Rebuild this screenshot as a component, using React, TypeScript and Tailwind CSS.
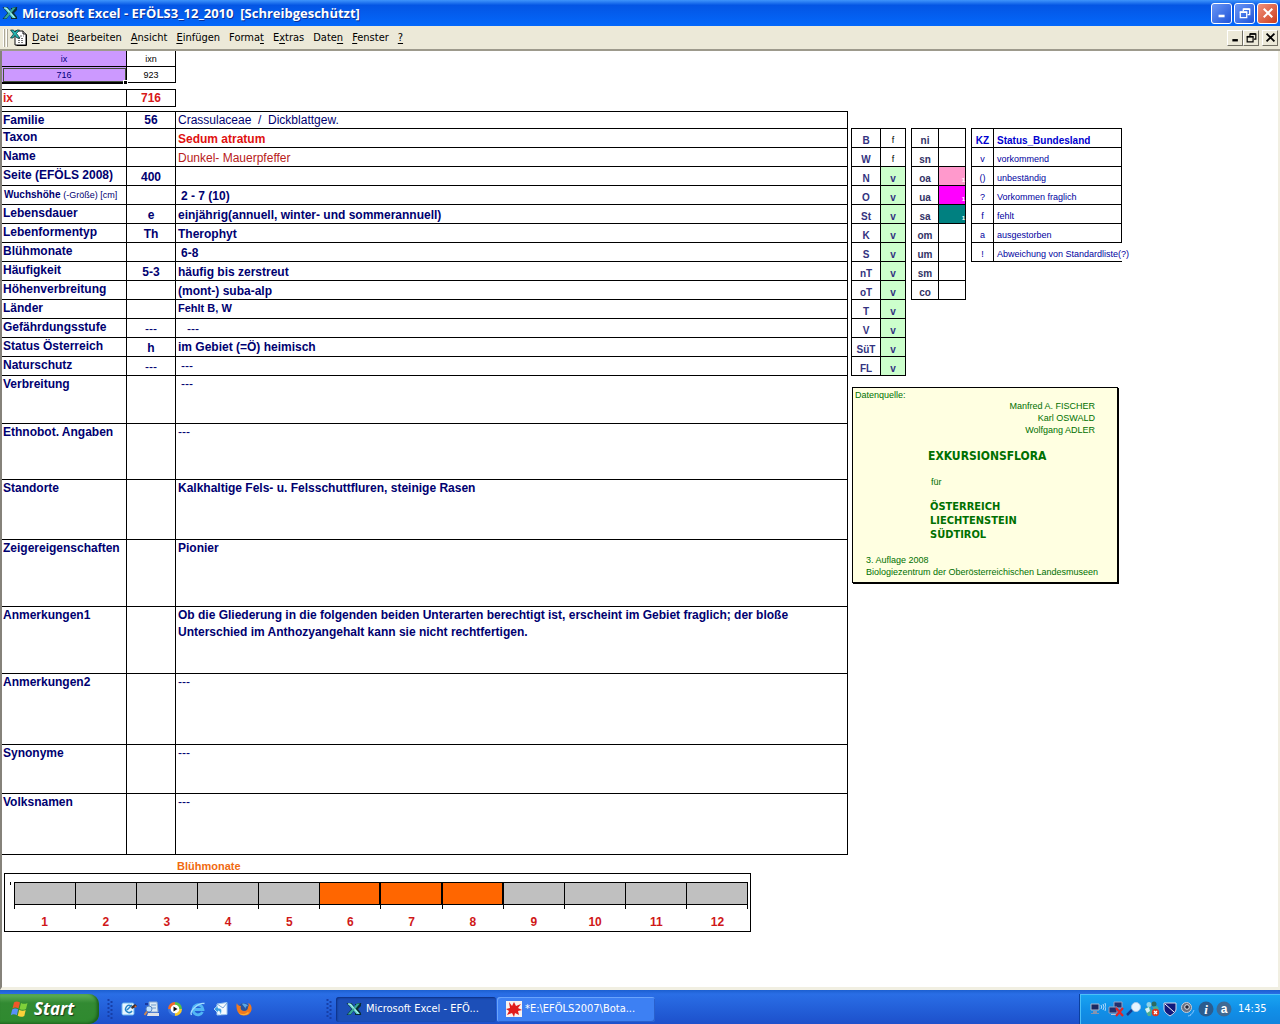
import React from 'react';

type Align = 'top' | 'middle' | 'bottom';

interface Row {
  label: string;
  code?: string;
  value?: string;
  height: string;
  align?: Align;
  tone?: string;
  indent?: string;
}

const alignClass = {
  top: 'align-top',
  middle: 'align-middle',
  bottom: 'align-bottom',
};

const rows: Row[] = [
  { label: 'Familie', code: '56', value: 'Crassulaceae\u00a0 /\u00a0 Dickblattgew.', height: 'h-[17px]', tone: 'font-normal' },
  { label: 'Taxon', value: 'Sedum atratum', height: 'h-[19px]', tone: 'text-[#e01010]' },
  { label: 'Name', value: 'Dunkel- Mauerpfeffer', height: 'h-[19px]', tone: 'font-normal text-[#b82020]' },
  { label: 'Seite (EFÖLS 2008)', code: '400', height: 'h-[19px]' },
  { label: 'Wuchshöhe', value: '2 - 7 (10)', height: 'h-[19px]', indent: 'pl-[5px]' },
  { label: 'Lebensdauer', code: 'e', value: 'einjährig(annuell, winter- und sommerannuell)', height: 'h-[19px]' },
  { label: 'Lebenformentyp', code: 'Th', value: 'Therophyt', height: 'h-[19px]' },
  { label: 'Blühmonate', value: '6-8', height: 'h-[19px]', indent: 'pl-[5px]' },
  { label: 'Häufigkeit', code: '5-3', value: 'häufig bis zerstreut', height: 'h-[19px]' },
  { label: 'Höhenverbreitung', value: '(mont-) suba-alp', height: 'h-[19px]' },
  { label: 'Länder', value: 'Fehlt B, W', height: 'h-[19px]', align: 'top', tone: 'text-[11px]' },
  { label: 'Gefährdungsstufe', code: '---', value: '---', height: 'h-[19px]', indent: 'pl-[11px]' },
  { label: 'Status Österreich', code: 'h', value: 'im Gebiet (=Ö) heimisch', height: 'h-[19px]', align: 'middle' },
  { label: 'Naturschutz', code: '---', value: '---', height: 'h-[19px]', align: 'middle', indent: 'pl-[5px]' },
  { label: 'Verbreitung', value: '---', height: 'h-[48px]', align: 'top', indent: 'pl-[5px]' },
  { label: 'Ethnobot. Angaben', value: '---', height: 'h-[56px]', align: 'top' },
  { label: 'Standorte', value: 'Kalkhaltige Fels- u. Felsschuttfluren, steinige Rasen', height: 'h-[60px]', align: 'top' },
  { label: 'Zeigereigenschaften', value: 'Pionier', height: 'h-[67px]', align: 'top' },
  {
    label: 'Anmerkungen1',
    value:
      'Ob die Gliederung in die folgenden beiden Unterarten berechtigt ist, erscheint im Gebiet fraglich; der bloße Unterschied im Anthozyangehalt kann sie nicht rechtfertigen.',
    height: 'h-[67px]',
    align: 'top',
    tone: 'leading-[17px]',
  },
  { label: 'Anmerkungen2', value: '---', height: 'h-[71px]', align: 'top' },
  { label: 'Synonyme', value: '---', height: 'h-[49px]', align: 'top' },
  { label: 'Volksnamen', value: '---', height: 'h-[61px]', align: 'top' },
];

const regions = [
  ['B', 'f'], ['W', 'f'], ['N', 'v'], ['O', 'v'], ['St', 'v'], ['K', 'v'], ['S', 'v'],
  ['nT', 'v'], ['oT', 'v'], ['T', 'v'], ['V', 'v'], ['SüT', 'v'], ['FL', 'v'],
];

const zones = [
  { name: 'ni' },
  { name: 'sn' },
  { name: 'oa', fill: 'bg-[#ff99cc]' },
  { name: 'ua', fill: 'bg-[#ff00ff]' },
  { name: 'sa', fill: 'bg-[#008080]' },
  { name: 'om' },
  { name: 'um' },
  { name: 'sm' },
  { name: 'co' },
];

const statuses = [
  ['v', 'vorkommend'],
  ['()', 'unbeständig'],
  ['?', 'Vorkommen fraglich'],
  ['f', 'fehlt'],
  ['a', 'ausgestorben'],
  ['!', 'Abweichung von Standardliste(?)'],
];

const menus = [
  ['', 'D', 'atei'],
  ['', 'B', 'earbeiten'],
  ['', 'A', 'nsicht'],
  ['', 'E', 'infügen'],
  ['Forma', 't', ''],
  ['E', 'x', 'tras'],
  ['Date', 'n', ''],
  ['', 'F', 'enster'],
  ['', '?', ''],
];

const months = [1, 2, 3, 4, 5, 6, 7, 8, 9, 10, 11, 12];
const flowering = [6, 7, 8];

const tahoma = "font-['DejaVu_Sans_Condensed','Noto_Sans',sans-serif]";
const trebuchet = "font-['Open_Sans','Noto_Sans',sans-serif]";

function ExcelIcon({ className }: { className?: string }) {
  return (
    <svg viewBox="0 0 16 16" className={className} aria-hidden="true">
      <path d="M9 3h6v2l-3 3 3 4v2H9z" fill="#0a3038" />
      <path d="M0.500 2h5l3 4 3-4h4l-5 6 5 6h-5l-3-4-3 4h-4l5-6z" fill="#0b2c33" />
      <path d="M1.500 2.500h3.500l9 10.500h-3.500z" fill="#5fd6d0" />
      <path d="M11 2.500h3L4.500 13.500H1.500z" fill="#35a79c" />
      <path d="M2 3h2l8.500 9.500" fill="none" stroke="#d8fffa" strokeWidth="0.800" />
    </svg>
  );
}

function WorkbookIcon() {
  return (
    <svg viewBox="0 0 18 18" className="size-[18px]" aria-hidden="true">
      <path d="M5 2h8l3 3v11H5z" fill="#fff" stroke="#111" />
      <path d="M13 2v3h3" fill="#ccc" stroke="#111" />
      <path d="M10 7h4M8 9.500h6M8 11.500h6M8 13.500h6" stroke="#777" strokeDasharray="2 1" />
      <path d="M16.500 5.500v11h-10" fill="none" stroke="#000" />
      <path d="M0.500 1h3l1.500 2 2-2h2.500L6.500 4.500 10 9H7L5 6.500 3 9H0.500L3.500 5z" fill="#25b3ae" stroke="#062b2e" strokeWidth="0.700" />
    </svg>
  );
}

function Minimize() {
  return <path d="M3 10.500h7" strokeWidth="3" />;
}

function Restore() {
  return (
    <>
      <path d="M5 5V2.500h7.500V9H10" strokeWidth="1.500" />
      <path d="M5 2.500h7.500" strokeWidth="2" />
      <path d="M1.500 6h7.500v6.500H1.500z" strokeWidth="1.500" />
      <path d="M1 6h8.500" strokeWidth="2" />
    </>
  );
}

function Close() {
  return <path d="M2 2l10 10M12 2L2 12" strokeWidth="2.300" />;
}

function CaptionButton({ label, tone, children }: { label: string; tone: string; children: React.ReactNode }) {
  return (
    <button
      aria-label={label}
      className={`flex size-[21px] items-center justify-center rounded-[3px] border border-white ${tone}`}
    >
      <svg viewBox="0 0 14 14" className="size-3" fill="none" stroke="#fff">
        {children}
      </svg>
    </button>
  );
}

function SheetButton({ label, children }: { label: string; children: React.ReactNode }) {
  return (
    <button
      aria-label={label}
      className="flex size-4 items-center justify-center border border-t-white border-l-white border-r-[#716f64] border-b-[#716f64] bg-[#ece9d8]"
    >
      <svg viewBox="0 0 14 14" className="size-[11px]" fill="none" stroke="#000">
        {children}
      </svg>
    </button>
  );
}

function TitleBar() {
  return (
    <header className="flex h-[26px] items-center bg-linear-to-b from-[#3f94fb] from-0% via-[#0455e4] via-20% to-[#0468fb] pr-[2px] pl-[2px]">
      <ExcelIcon className="size-4" />
      <h1 className={`ml-1 flex-1 text-[13px] leading-[20px] font-bold whitespace-pre text-white [text-shadow:1px_1px_#0b2f96] ${trebuchet}`}>
        {'Microsoft Excel - EFÖLS3_12_2010  [Schreibgeschützt]'}
      </h1>
      <div className="flex gap-[2px]">
        <CaptionButton label="Minimieren" tone="bg-linear-to-br from-[#6a96f5] to-[#1f52d8]"><Minimize /></CaptionButton>
        <CaptionButton label="Wiederherstellen" tone="bg-linear-to-br from-[#6a96f5] to-[#1f52d8]"><Restore /></CaptionButton>
        <CaptionButton label="Schließen" tone="bg-linear-to-br from-[#f0907a] to-[#cc3a14]"><Close /></CaptionButton>
      </div>
    </header>
  );
}

function MenuBar() {
  return (
    <nav className={`flex h-[25px] items-center border-b-2 border-[#9d9a8c] bg-[#ece9d8] pr-[2px] pl-[3px] text-[11px] text-black ${tahoma}`}>
      <span className="h-[18px] w-[2px] border-l border-white bg-[#aca899]" />
      <span className="mr-[2px] ml-px h-[18px] w-[2px] border-l border-white bg-[#aca899]" />
      <WorkbookIcon />
      <div className="ml-1 flex flex-1 gap-[9px]">
        {menus.map(([before, key, after]) => (
          <button key={before + key + after} className="leading-4">
            {before}
            <span className="underline underline-offset-2">{key}</span>
            {after}
          </button>
        ))}
      </div>
      <div className="flex">
        <SheetButton label="Mappe minimieren"><Minimize /></SheetButton>
        <SheetButton label="Mappe wiederherstellen"><Restore /></SheetButton>
        <span className="w-[3px]" />
        <SheetButton label="Mappe schließen"><Close /></SheetButton>
      </div>
    </nav>
  );
}

function IndexTables() {
  return (
    <>
      <table className="w-[174px] table-fixed border-separate border-spacing-0 text-center text-[9px] leading-[14px]">
        <thead>
          <tr>
            <th className="h-4 w-[125px] border-r border-b border-black bg-[#cc99ff] p-0 font-normal text-[#000080]">ix</th>
            <th className="h-4 border-r border-b border-black p-0 font-normal">ixn</th>
          </tr>
        </thead>
        <tbody>
          <tr>
            <td className="relative h-4 border-r border-b border-black bg-[#cc99ff] p-0 text-[#000080] outline-1 -outline-offset-2 outline-[#44503c]">
              716
              <span className="absolute -right-[2px] -bottom-[3px] size-[5px] border border-white bg-black" />
            </td>
            <td className="h-4 border-r border-b border-black p-0">923</td>
          </tr>
        </tbody>
      </table>
      <div className="mb-[5px] h-px w-[124px] bg-black" />
      <table className="mb-1 w-[174px] table-fixed border-separate border-spacing-0 border-t border-black text-[12px] leading-4 text-[#d81818]">
        <tbody>
          <tr>
            <th scope="row" className="h-[17px] w-[125px] border-r border-b border-black p-0 pl-px text-left font-bold">ix</th>
            <td className="h-[17px] border-r border-b border-black p-0 text-center font-bold">716</td>
          </tr>
        </tbody>
      </table>
    </>
  );
}

function SpeciesTable() {
  return (
    <table className="w-full table-fixed border-separate border-spacing-0 border-t border-black text-[12px] leading-4 font-bold text-[#000070]">
      <colgroup>
        <col className="w-[125px]" />
        <col className="w-[49px]" />
        <col />
      </colgroup>
      <tbody>
        {rows.map((row) => (
          <tr key={row.label}>
            <th scope="row" className="border-r border-b border-black p-0 pl-px text-left align-top whitespace-nowrap">
              {row.label === 'Wuchshöhe' ? (
                <span className="pl-px text-[10px]">
                  Wuchshöhe <span className="text-[9px] font-normal">(-Größe) [cm]</span>
                </span>
              ) : (
                row.label
              )}
            </th>
            <td className={`border-r border-b border-black p-0 text-center align-bottom ${row.code === '---' ? 'font-normal' : ''}`}>
              {row.code}
            </td>
            <td
              className={`border-r border-b border-black p-0 pr-2 ${row.height} ${alignClass[row.align ?? 'bottom']} ${row.indent ?? 'pl-[2px]'} ${row.value === '---' ? 'font-normal' : ''} ${row.tone ?? ''}`}
            >
              {row.value}
            </td>
          </tr>
        ))}
      </tbody>
    </table>
  );
}

function FloweringChart() {
  return (
    <figure className="mr-[97px] ml-[2px] flex flex-col">
      <figcaption className="h-[18px] pt-[3px] pl-[173px] text-[11px] leading-4 font-bold text-[#f06a10]">Blühmonate</figcaption>
      <div className="flex h-[59px] border border-black pt-2 pr-[2px]">
        <div className="w-[9px] shrink-0 pl-[5px]">
          <div className="h-[3px] w-px bg-black" />
        </div>
        <div className="flex-1">
          <div className="grid grid-cols-12 border-l border-black">
            {months.map((month) => (
              <div key={month}>
                <div
                  className={`h-[23px] border-y border-r border-black ${flowering.includes(month) ? 'border-r-2 bg-[#ff6600]' : 'bg-[#c0c0c0]'}`}
                />
                <div className="h-1 border-r border-black" />
              </div>
            ))}
          </div>
          <div className="grid grid-cols-12 pt-[5px] text-center text-[12px] leading-4 font-bold text-[#d01818]">
            {months.map((month) => (
              <span key={month}>{month}</span>
            ))}
          </div>
        </div>
      </div>
    </figure>
  );
}

function StatusTables() {
  const cell = 'h-[19px] border-r border-b border-black p-0 align-bottom';
  return (
    <div className="flex items-start gap-[5px] text-[10px] leading-[13px]">
      <table className="w-[55px] table-fixed border-separate border-spacing-0 border-t border-l border-black text-center font-bold text-[#333380]">
        <tbody>
          {regions.map(([name, state]) => (
            <tr key={name}>
              <th scope="row" className={`${cell} w-[29px]`}>{name}</th>
              <td className={`${cell} ${state === 'v' ? 'bg-[#ccffcc]' : 'text-[9px] font-normal text-black'}`}>{state}</td>
            </tr>
          ))}
        </tbody>
      </table>
      <table className="w-[55px] table-fixed border-separate border-spacing-0 border-t border-l border-black text-center font-bold text-[#333366]">
        <tbody>
          {zones.map(({ name, fill }) => (
            <tr key={name}>
              <th scope="row" className={`${cell} w-[27px]`}>{name}</th>
              <td className={`${cell} text-right text-[6px] leading-[10px] text-white ${fill ?? ''}`}>{fill ? '1' : ''}</td>
            </tr>
          ))}
        </tbody>
      </table>
      <table className="w-[151px] table-fixed border-separate border-spacing-0 border-t border-l border-black text-[9px] text-[#0000a0]">
        <thead>
          <tr className="text-[10px] text-[#0000d0]">
            <th className={`${cell} w-[22px] text-center font-bold`}>KZ</th>
            <th className={`${cell} pl-[3px] text-left font-bold`}>Status_Bundesland</th>
          </tr>
        </thead>
        <tbody>
          {statuses.map(([key, text]) => (
            <tr key={key}>
              <td className={`${cell} text-center`}>{key}</td>
              <td className={`h-[19px] border-b border-black p-0 pl-[3px] align-bottom whitespace-nowrap ${key === '!' ? '' : 'border-r'}`}>{text}</td>
            </tr>
          ))}
        </tbody>
      </table>
    </div>
  );
}

function SourceCard() {
  return (
    <aside className="mt-[11px] ml-px h-[196px] w-[266px] border border-black bg-[#ffffe1] pl-[2px] text-[9px] leading-3 text-[#007000] shadow-[1px_1px_#000]">
      <p className="pt-px">Datenquelle:</p>
      <p className="-mt-px pr-[22px] text-right">
        Manfred A. FISCHER
        <br />
        Karl OSWALD
        <br />
        Wolfgang ADLER
      </p>
      <div className={`pl-[73px] ${tahoma}`}>
        <h2 className="mt-3 text-[12px] leading-4 font-bold">EXKURSIONSFLORA</h2>
        <p className="my-3 pl-[3px] font-['Liberation_Sans',sans-serif]">für</p>
        <p className="pl-[2px] text-[11px] leading-[14px] font-bold">
          ÖSTERREICH
          <br />
          LIECHTENSTEIN
          <br />
          SÜDTIROL
        </p>
      </div>
      <p className="mt-3 pl-[11px]">
        3. Auflage 2008
        <br />
        Biologiezentrum der Oberösterreichischen Landesmuseen
      </p>
    </aside>
  );
}

function WindowsFlag() {
  return (
    <svg viewBox="0 0 20 18" className="h-[18px] w-5" aria-hidden="true">
      <path d="M4 2.500C6 1 8 1.500 10 2.500L8.500 8.500C6.500 7.500 4.500 7 2.500 8.500z" fill="#f0572a" />
      <path d="M11 3c2 1 4 1.300 6.500 0L16 9c-2.500 1.300-4.500 1-6.500 0z" fill="#7fd03a" />
      <path d="M2.200 9.500c2-1.500 4-1 6-.2L6.800 15.200C5 14.200 3 13.800.8 15.200z" fill="#5a90f8" />
      <path d="M9.200 9.800c2 1 4 1.400 6.500.2l-1.400 6c-2.500 1.300-4.500 1-6.600-.2z" fill="#fbd13a" />
    </svg>
  );
}

function Grip() {
  return (
    <svg viewBox="0 0 6 22" className="h-[22px] w-[6px]" aria-hidden="true">
      <path d="M1.500 1v20M4.500 3v18" stroke="#163fa8" strokeWidth="2" strokeDasharray="2 2" />
    </svg>
  );
}

function QuickLaunch() {
  return (
    <div className="flex items-center gap-[7px]">
      <button aria-label="Desktop anzeigen">
        <svg viewBox="0 0 16 16" className="size-4">
          <rect x="1" y="2" width="12" height="12" rx="1.500" fill="#e8f6ff" stroke="#6cb6ee" />
          <path d="M10 5a3.500 3.500 0 1 0 1 5M6 9l5-5" fill="none" stroke="#2484c8" strokeWidth="1.500" />
          <path d="M10 6l4-3 2 2-5 3z" fill="#3a2a2a" />
          <circle cx="14.500" cy="5.500" r="1" fill="#e86a2a" />
        </svg>
      </button>
      <button aria-label="Suche">
        <svg viewBox="0 0 16 16" className="size-4">
          <path d="M5 1h8l1 10H6z" fill="#dceaf8" stroke="#8aa8cc" />
          <path d="M7 4h5M8 7h4" stroke="#6f9ccb" />
          <path d="M4 12h11v3H3z" fill="#dfe2e7" />
          <circle cx="5" cy="8" r="3" fill="#bfe2ff" stroke="#5c86bf" />
          <path d="M3 10.500L0.500 14" stroke="#c98650" strokeWidth="2" />
          <path d="M1 2h3v2H1z" fill="#1738a0" />
        </svg>
      </button>
      <button aria-label="Medienwiedergabe">
        <svg viewBox="0 0 16 16" className="size-4">
          <path d="M8 1a7 7 0 0 0-7 7h7z" fill="#f06a2a" />
          <path d="M8 1a7 7 0 0 1 7 7H8z" fill="#56c04a" />
          <path d="M1 8a7 7 0 0 0 7 7V8z" fill="#3a76e0" />
          <path d="M15 8a7 7 0 0 1-7 7V8z" fill="#f7c92c" />
          <circle cx="8" cy="8" r="4.300" fill="#fff" />
          <path d="M6.500 5.500L10.500 8l-4 2.500z" fill="#111" />
        </svg>
      </button>
      <button aria-label="Internet Explorer">
        <svg viewBox="0 0 16 16" className="size-4">
          <path d="M12.500 11A5 5 0 1 1 13 8.500H4" fill="none" stroke="#52b6f4" strokeWidth="2.800" />
          <path d="M1.500 14C-1 10 9 1 14.500 2.500" fill="none" stroke="#a5dcff" strokeWidth="1.300" />
        </svg>
      </button>
      <button aria-label="Outlook Express">
        <svg viewBox="0 0 16 16" className="size-4">
          <path d="M4 3l10-1.500v12L4 14z" fill="#f5faff" stroke="#9cc7ee" />
          <path d="M4 3l6 4 4-5" fill="none" stroke="#7aa7d8" />
          <path d="M1 8l4-3.500V7c4 0 5 3 2 7 0-3 0-4-2-4v2z" fill="#3d9fe4" stroke="#e6f6ff" strokeWidth="0.700" />
        </svg>
      </button>
      <button aria-label="Firefox">
        <svg viewBox="0 0 16 16" className="size-4">
          <circle cx="8" cy="8" r="6" fill="#28539e" />
          <path d="M6 3c2-1 5 0 6 2-2 0-3 1-2 3z" fill="#5ba8e4" />
          <path d="M1 2c0 2 2 3 4 3-1 2 0 5 3 5s4-2 4-4c1-1 1-3 0-4 3 1 4 4 3.500 7A7.500 7.500 0 0 1 1 9C.500 6 0 4 1 2z" fill="#f0791e" />
          <path d="M3 12c3 2 7 1 9-1l1 1c-3 3-8 3-10 0z" fill="#fbb034" />
        </svg>
      </button>
    </div>
  );
}

function Tray() {
  return (
    <div className="flex h-[30px] w-[201px] items-center gap-[2px] border-l border-[#0a3f9e] bg-linear-to-b from-[#19a5f2] via-[#1190e8] to-[#1184de] pl-[10px] shadow-[inset_1px_1px_#4cc0f8]">
      <svg viewBox="0 0 16 16" className="size-4" aria-hidden="true">
        <path d="M1 3h8v6H1z" fill="#1b2760" stroke="#aab6cc" />
        <path d="M3 10h4v2h2v1H1v-1h2z" fill="#8893ad" />
        <path d="M11 4q1.500 2 0 4M13 3q2 3 0 6M15 2q2 4 0 8" fill="none" stroke="#d9ecff" strokeWidth="0.800" />
      </svg>
      <svg viewBox="0 0 16 16" className="size-4" aria-hidden="true">
        <path d="M6 1h8v6H6z" fill="#20306e" stroke="#95a2c2" />
        <path d="M1 6h8v6H1z" fill="#20306e" stroke="#95a2c2" />
        <path d="M3 13h5v1H3z" fill="#b7c2d6" />
        <path d="M8 7l7 8M15 7l-7 8" stroke="#e32424" strokeWidth="2.200" />
      </svg>
      <svg viewBox="0 0 16 16" className="size-4" aria-hidden="true">
        <path d="M6 9l-5 5" stroke="#173a8e" strokeWidth="2.500" />
        <circle cx="10" cy="6" r="4.500" fill="#e4f4ff" stroke="#a5c9ea" />
      </svg>
      <svg viewBox="0 0 16 16" className="size-4" aria-hidden="true">
        <circle cx="5" cy="3.500" r="2.500" fill="#8fd3e8" />
        <circle cx="10" cy="3" r="2.500" fill="#2d6a60" />
        <path d="M1 7l5-1 2 3-1 6H4L2 11zM8 6l5-1 2 3-3 3z" fill="#4cae92" />
        <path d="M1 8l4-2 1 4-3 2z" fill="#d8f2f4" />
        <circle cx="11.500" cy="11.500" r="3.700" fill="#da3a20" />
        <path d="M10 10l3 3M13 10l-3 3" stroke="#fff" strokeWidth="1.300" />
      </svg>
      <svg viewBox="0 0 16 16" className="size-4" aria-hidden="true">
        <path d="M2 2h12v6c0 3-3 5-6 7-3-2-6-4-6-7z" fill="#10187c" stroke="#d7dceb" />
        <path d="M3 3l9 8" stroke="#fff" />
      </svg>
      <svg viewBox="0 0 16 16" className="size-4" aria-hidden="true">
        <circle cx="6.500" cy="6.500" r="5" fill="#6b7180" stroke="#c9ced8" />
        <circle cx="7" cy="6" r="2.300" fill="#23283a" stroke="#e3e6ec" />
        <path d="M10 14q3-1 4-5M8 15q1 0 3-1" fill="none" stroke="#7fc4ff" />
      </svg>
      <svg viewBox="0 0 16 16" className="size-4" aria-hidden="true">
        <circle cx="8" cy="8" r="7.500" fill="#2b5c8e" />
        <text x="8" y="12.500" textAnchor="middle" fontFamily="Liberation Serif" fontSize="13" fontWeight="bold" fontStyle="italic" fill="#fff">i</text>
      </svg>
      <svg viewBox="0 0 16 16" className="size-4" aria-hidden="true">
        <circle cx="8" cy="8" r="7.500" fill="#3f6a94" />
        <text x="8" y="12" textAnchor="middle" fontFamily="Liberation Sans" fontSize="12" fontWeight="bold" fill="#fff">a</text>
      </svg>
      <time className={`ml-1 text-[11px] text-white ${tahoma}`}>14:35</time>
    </div>
  );
}

function Taskbar() {
  return (
    <footer className={`flex h-[34px] items-end bg-linear-to-b from-[#1c5fd0] from-0% via-[#2a6ee6] via-12% to-[#1d50cb] text-[11px] text-white ${tahoma}`}>
      <button
        className={`flex h-[30px] w-[99px] items-center gap-1 rounded-r-[10px] bg-linear-to-b from-[#5fb05a] from-0% via-[#328a32] via-30% to-[#2f8a2f] pl-[10px] text-[17px] font-bold text-white italic shadow-[inset_-2px_-1px_3px_#1c5f1c] [text-shadow:1px_1px_1px_#1a3c1a] ${trebuchet}`}
      >
        <WindowsFlag />
        Start
      </button>
      <div className="flex h-[30px] flex-1 items-center">
        <div className="flex w-[233px] items-center justify-between pl-2">
          <div className="flex items-center gap-2">
            <Grip />
            <QuickLaunch />
          </div>
          <Grip />
        </div>
        <button className="ml-1 flex h-[25px] w-[160px] items-center gap-1 rounded-[3px] bg-[#1c4fb8] pl-[10px] shadow-[inset_1px_1px_2px_#0c2f80]">
          <ExcelIcon className="size-4" />
          Microsoft Excel - EFÖ...
        </button>
        <button className="ml-px flex h-[25px] w-[158px] items-center gap-[3px] rounded-[3px] bg-[#3d80f3] pl-[9px] shadow-[inset_1px_1px_#6aa4fb,inset_-1px_-1px_#2a60cc]">
          <svg viewBox="0 0 16 16" className="size-4" aria-hidden="true">
            <rect width="16" height="16" fill="#f8f2f0" />
            <path d="M3 1l3 4 2-4 2 4 5-2-3 4 4 2-4 1 1 4-4-2-1 4-2-4-5 2 2-4-3-2 4-1z" fill="#e01c1c" />
          </svg>
          *E:\EFÖLS2007\Bota...
        </button>
      </div>
      <Tray />
    </footer>
  );
}

export default function App() {
  return (
    <div className="flex min-h-screen flex-col bg-white font-['Liberation_Sans',sans-serif] text-black">
      <TitleBar />
      <MenuBar />
      <main className="flex flex-1 items-stretch gap-[3px] border-r-2 border-b-3 border-l-2 border-r-[#f1efe2] border-b-[#f1efe2] border-l-[#85827a]">
        <section className="min-w-0 flex-1">
          <IndexTables />
          <SpeciesTable />
          <FloweringChart />
        </section>
        <section className="w-[427px] shrink-0 pt-[77px]">
          <StatusTables />
          <SourceCard />
        </section>
      </main>
      <Taskbar />
    </div>
  );
}
